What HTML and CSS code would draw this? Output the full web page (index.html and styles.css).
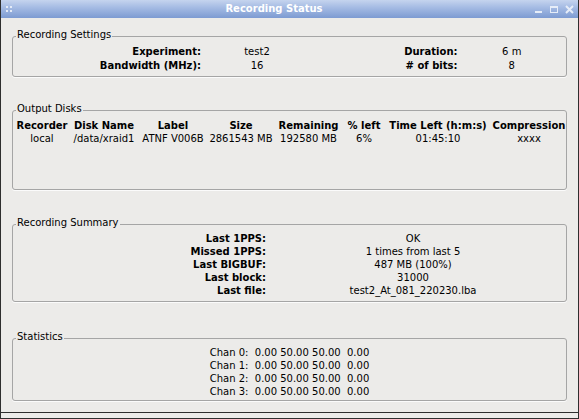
FILE: index.html
```html
<!DOCTYPE html>
<html lang="en">
<head>
<meta charset="utf-8">
<title>Recording Status</title>
<link rel="stylesheet" href="styles.css">
</head>
<body>
<div class="window">
  <div class="titlebar">
    <svg class="grip" width="17" height="18" viewBox="0 0 17 18" aria-hidden="true">
      <rect x="5" y="6" width="2" height="2"/>
      <rect x="9" y="6" width="2" height="2"/>
      <rect x="5" y="10" width="2" height="2"/>
      <rect x="9" y="10" width="2" height="2"/>
    </svg>
    <div class="title">Recording Status</div>
    <svg class="buttons" width="48" height="18" viewBox="0 0 48 18" aria-hidden="true">
      <rect class="btn-fill" x="5" y="11" width="7" height="2"/>
      <rect class="btn-fill" x="20" y="6" width="8" height="2"/>
      <rect class="btn-stroke" x="20.5" y="6.5" width="7" height="6"/>
      <path class="btn-x" d="M36 6 L43 13 M43 6 L36 13"/>
    </svg>
  </div>

  <div class="content">
    <fieldset class="group group-settings">
      <legend>Recording Settings</legend>
      <div class="settings-grid">
        <span class="lbl">Experiment:</span><span class="val">test2</span>
        <span class="lbl">Duration:</span><span class="val">6 m</span>
        <span class="lbl">Bandwidth (MHz):</span><span class="val">16</span>
        <span class="lbl"># of bits:</span><span class="val">8</span>
      </div>
    </fieldset>

    <fieldset class="group group-disks">
      <legend>Output Disks</legend>
      <div class="disks-grid">
        <span class="hd">Recorder</span>
        <span class="hd">Disk Name</span>
        <span class="hd">Label</span>
        <span class="hd">Size</span>
        <span class="hd">Remaining</span>
        <span class="hd">% left</span>
        <span class="hd">Time Left (h:m:s)</span>
        <span class="hd">Compression</span>
        <span>local</span>
        <span>/data/xraid1</span>
        <span>ATNF V006B</span>
        <span>2861543 MB</span>
        <span>192580 MB</span>
        <span>6%</span>
        <span>01:45:10</span>
        <span>xxxx</span>
      </div>
    </fieldset>

    <fieldset class="group group-summary">
      <legend>Recording Summary</legend>
      <div class="summary-grid">
        <span class="lbl">Last 1PPS:</span><span class="val">OK</span>
        <span class="lbl">Missed 1PPS:</span><span class="val">1 times from last 5</span>
        <span class="lbl">Last BIGBUF:</span><span class="val">487 MB (100%)</span>
        <span class="lbl">Last block:</span><span class="val">31000</span>
        <span class="lbl">Last file:</span><span class="val">test2_At_081_220230.lba</span>
      </div>
    </fieldset>

    <fieldset class="group group-stats">
      <legend>Statistics</legend>
      <div class="stats-lines">
        <div class="stat">Chan 0:  0.00 50.00 50.00  0.00</div>
        <div class="stat">Chan 1:  0.00 50.00 50.00  0.00</div>
        <div class="stat">Chan 2:  0.00 50.00 50.00  0.00</div>
        <div class="stat">Chan 3:  0.00 50.00 50.00  0.00</div>
      </div>
    </fieldset>
  </div>

  <div class="strip"></div>
</div>
</body>
</html>
```

FILE: styles.css
```css
html, body {
  margin: 0;
  padding: 0;
  background: #ecebe9;
}

body {
  font-family: "DejaVu Sans", "Liberation Sans", sans-serif;
  font-size: 10px;
  color: #000;
}

.window {
  width: 579px;
  height: 419px;
  box-sizing: border-box;
  border-left: 1px solid #2e2e2e;
  border-right: 1px solid #2e2e2e;
  display: flex;
  flex-direction: column;
  background: #ecebe9;
}

.titlebar {
  height: 18px;
  flex: 0 0 18px;
  display: flex;
  align-items: stretch;
  background: linear-gradient(to bottom, #c5d4ee 0%, #a6bce4 40%, #7d9bd2 100%);
}

.grip {
  flex: 0 0 17px;
  fill: #e4ebf7;
}

.title {
  flex: 1;
  text-align: center;
  color: #fff;
  font-weight: bold;
  font-size: 10px;
  line-height: 17px;
}

.buttons {
  flex: 0 0 48px;
}

.btn-fill {
  fill: #e6edf8;
}

.btn-stroke {
  fill: none;
  stroke: #e6edf8;
  stroke-width: 1;
}

.btn-x {
  stroke: #e6edf8;
  stroke-width: 2;
  fill: none;
}

.content {
  flex: 1;
  padding: 11px 11px 0 11px;
  display: flex;
  flex-direction: column;
}

.group {
  margin: 0;
  padding: 0;
  min-width: 0;
  border: 1px solid #a5a5a5;
  border-radius: 3px;
  box-shadow: 0 1px 0 #fbfbfb;
}

.group legend {
  margin-left: 3px;
  padding: 0 1px 2px 1px;
  line-height: 12px;
  font-size: 10px;
}

.group-disks { margin-top: 26px; }
.group-summary { margin-top: 27px; }
.group-stats { margin-top: 29px; }

.lbl {
  font-weight: bold;
  text-align: right;
}

.val {
  text-align: center;
}

/* Recording Settings */
.settings-grid {
  display: grid;
  grid-template-columns: 188px 112px 144.5px 1fr;
  line-height: 14px;
  padding-top: 2px;
  padding-bottom: 3px;
}

/* Output Disks */
.disks-grid {
  display: grid;
  grid-template-columns: 56px 68px 70px 66px 69px 42px 106px 76px;
  margin-left: 1px;
  padding-top: 2px;
  padding-bottom: 44px;
  line-height: 13px;
  text-align: center;
  white-space: nowrap;
}

.hd {
  font-weight: bold;
}

/* Recording Summary */
.summary-grid {
  display: grid;
  grid-template-columns: 253px 1fr;
  padding-right: 6px;
  line-height: 13px;
  padding-top: 1px;
  padding-bottom: 4px;
}

/* Statistics */
.stats-lines {
  padding-top: 1px;
  padding-bottom: 2px;
  line-height: 13px;
  text-align: center;
}

.stat {
  white-space: pre;
}

.strip {
  flex: 0 0 5px;
  border-top: 1px solid #2e2e2e;
  border-bottom: 1px solid #2e2e2e;
  background: #ecebe9;
}
```
